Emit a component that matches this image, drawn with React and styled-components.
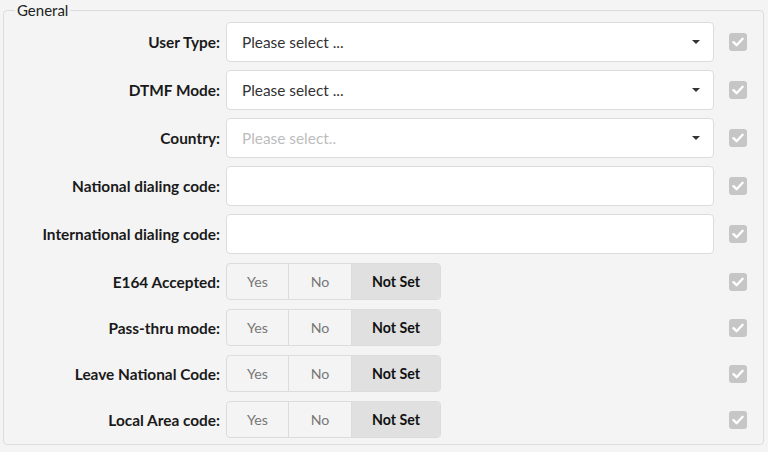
import React from "react";
import styled, { createGlobalStyle } from "styled-components";

const GlobalStyle = createGlobalStyle`
  html, body {
    margin: 0;
    padding: 0;
    background: #f4f4f4;
    font-family: Lato, "Liberation Sans", sans-serif;
  }
`;

const textFields = [
  { label: "User Type:", type: "select", value: "Please select ..." },
  { label: "DTMF Mode:", type: "select", value: "Please select ..." },
  { label: "Country:", type: "select", placeholder: "Please select.." },
  { label: "National dialing code:", type: "text" },
  { label: "International dialing code:", type: "text" },
];

const toggleFields = [
  "E164 Accepted:",
  "Pass-thru mode:",
  "Leave National Code:",
  "Local Area code:",
];

export default function App() {
  return (
    <>
      <GlobalStyle />
      <Fieldset>
        <Legend>General</Legend>
        <Rows>
          {textFields.map((f) => (
            <Row key={f.label}>
              <Label>{f.label}</Label>
              <Input>
                {f.value && <Value>{f.value}</Value>}
                {f.placeholder && <Placeholder>{f.placeholder}</Placeholder>}
                {f.type === "select" && <Caret />}
              </Input>
              <Check />
            </Row>
          ))}
          {toggleFields.map((label) => (
            <Row key={label} $toggle>
              <Label>{label}</Label>
              <Toggle>
                <ToggleBtn $w={61}>Yes</ToggleBtn>
                <ToggleBtn $w={62}>No</ToggleBtn>
                <ToggleBtn $w={88} $active>Not Set</ToggleBtn>
              </Toggle>
              <Spacer />
              <Check />
            </Row>
          ))}
        </Rows>
      </Fieldset>
    </>
  );
}

function Check() {
  return (
    <CheckBox>
      <svg width="12" height="10" viewBox="0 0 12 10">
        <path
          d="M1.5 5.2 L4.6 8.2 L10.6 1.8"
          fill="none"
          stroke="#fff"
          strokeWidth="2.4"
          strokeLinecap="round"
          strokeLinejoin="round"
        />
      </svg>
    </CheckBox>
  );
}

const Fieldset = styled.fieldset`
  margin: 0 4px 0 3px;
  padding: 2px 0 6px 0;
  height: 445px;
  box-sizing: border-box;
  border: 1px solid #dcdcdc;
  border-radius: 4px;
  background: #f4f4f4;
`;

const Legend = styled.legend`
  margin-left: 11px;
  padding: 0 2px;
  font-size: 15px;
  line-height: 20px;
  color: #222;
`;

const Rows = styled.div`
  display: flex;
  flex-direction: column;
  gap: 8px;
`;

const Row = styled.div`
  display: flex;
  align-items: center;
  height: ${(p) => (p.$toggle ? 37 : 40)}px;
  margin-top: ${(p) => (p.$toggle ? 1 : 0)}px;
`;

const Label = styled.div`
  width: 216px;
  flex: none;
  text-align: right;
  font-weight: 700;
  font-size: 15.4px;
  color: #1a1a1a;
  margin-right: 6px;
  white-space: nowrap;
`;

const Input = styled.div`
  width: 488px;
  height: 40px;
  flex: none;
  box-sizing: border-box;
  border: 1px solid #dcdcdc;
  border-radius: 4px;
  background: #fff;
  display: flex;
  align-items: center;
  padding: 0 13px 0 15px;
  font-size: 15.4px;
`;

const Value = styled.span`
  color: #333;
  flex: 1;
`;

const Placeholder = styled.span`
  color: #bdbdbd;
  flex: 1;
`;

const Caret = styled.span`
  margin-left: auto;
  width: 0;
  height: 0;
  border-left: 4px solid transparent;
  border-right: 4px solid transparent;
  border-top: 4px solid #333;
`;

const Toggle = styled.div`
  display: flex;
  flex: none;
  height: 37px;
  box-sizing: border-box;
  border: 1px solid #dcdcdc;
  border-radius: 4px;
  overflow: hidden;
  background: #f4f4f4;
`;

const ToggleBtn = styled.div`
  width: ${(p) => p.$w}px;
  display: flex;
  align-items: center;
  justify-content: center;
  font-size: 14.2px;
  color: ${(p) => (p.$active ? "#111" : "#777")};
  font-weight: ${(p) => (p.$active ? 700 : 400)};
  background: ${(p) => (p.$active ? "#e0e0e0" : "transparent")};
  & + & {
    border-left: 1px solid #dcdcdc;
  }
`;

const Spacer = styled.div`
  width: ${488 - 215}px;
  flex: none;
`;

const CheckBox = styled.div`
  width: 18px;
  height: 18px;
  flex: none;
  margin-left: 15px;
  border-radius: 3px;
  background: #c6c6c6;
  display: flex;
  align-items: center;
  justify-content: center;
`;
